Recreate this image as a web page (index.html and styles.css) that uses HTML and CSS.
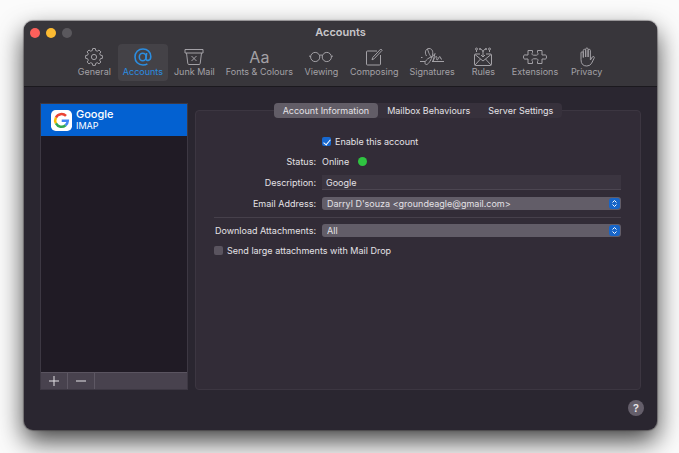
FILE: index.html
```html
<!DOCTYPE html>
<html lang="en">

<head>
  <meta charset="UTF-8" />
  <meta name="viewport" content="width=device-width, initial-scale=1" />
  <title>Accounts</title>
  <link rel="stylesheet" href="styles.css">
</head>

<body>
  <div class="window">
    <header class="titlebar">
      <div class="title-row">
        <div class="lights">
          <span class="light close"></span>
          <span class="light minimise"></span>
          <span class="light zoom"></span>
        </div>
        <h1>Accounts</h1>
      </div>

      <nav class="toolbar">
        <button type="button" class="tool">
          <svg viewBox="0 0 24 20"><path d="M10.7 1.5h2.6l.4 2 1.6.7 1.7-1.2 1.9 1.9-1.2 1.7.7 1.6 2 .4v2.7l-2 .4-.7 1.6 1.2 1.7-1.9 1.9-1.7-1.2-1.6.7-.4 2h-2.6l-.4-2-1.6-.7L7 16.9 5.100 15l1.200-1.700-.7-1.600-2-.4V8.600l2-.4.7-1.600L5.100 4.900 7 3l1.700 1.200 1.600-.7z"/><circle cx="12" cy="10" r="2.600"/></svg>
          <span>General</span>
        </button>
        <button type="button" class="tool active">
          <svg viewBox="0 0 24 20"><ellipse cx="11.700" cy="10" rx="3.400" ry="3.800" stroke-width="1.600"/><path stroke-width="1.600" d="M15.600 6l-.6 5.500c-.2 2.800 4.800 2.800 4.800-2C19.800 5 16.500 2 12 2c-4.700 0-8 3.300-8 8s3.300 8 8 8c1.700 0 3.300-.4 4.400-1.100"/></svg>
          <span>Accounts</span>
        </button>
        <button type="button" class="tool">
          <svg viewBox="0 0 24 20"><path d="M3 2.500h18v3.500H3zM4.500 6l1.300 10.500q.1 1 1.200 1h10q1.100 0 1.200-1L19.500 6M9.500 9l5 5M14.500 9l-5 5"/></svg>
          <span>Junk Mail</span>
        </button>
        <button type="button" class="tool">
          <span class="aa">Aa</span>
          <span>Fonts &amp; Colours</span>
        </button>
        <button type="button" class="tool">
          <svg viewBox="0 0 24 20"><circle cx="6.200" cy="10" r="4.600"/><circle cx="17.800" cy="10" r="4.600"/><path d="M10.500 8.500q1.500-1.200 3 0M1.600 9.500L0 9M22.400 9.500L24 9"/></svg>
          <span>Viewing</span>
        </button>
        <button type="button" class="tool">
          <svg viewBox="0 0 24 20"><path d="M15 4H5.500Q4.500 4 4.500 5v12q0 1 1 1h12q1 0 1-1V8"/><path d="M10 12.800l.7-2.300L18.800 2l1.300 1.300-8 8.500z"/></svg>
          <span>Composing</span>
        </button>
        <button type="button" class="tool">
          <svg viewBox="0 0 24 20"><path d="M1 10.500h1.500M0 14.500h5M12 14.500h12M6.500 9C4 5 6 1.500 9 1.500c4 0 4.500 4.500 3 8.500C10.500 14 8 18 6 17.500c-2.500-1 0-5 3-6.500s5-2.500 6-4.500L13 14c1.500-3 2.500-5 3.500-4.500s-.5 3 .5 3.500c1.200.4 2-4 3-3.500s0 3.500 2 2.500M7.500 2c1.500 5 2.500 6.500 4.500 9"/></svg>
          <span>Signatures</span>
        </button>
        <button type="button" class="tool">
          <svg viewBox="0 0 24 20"><path d="M9 7H4.500q-1 0-1 1v9.500q0 1 1 1h15q1 0 1-1V8q0-1-1-1H15M4 7.500l8 6.500 8-6.500M4 18l5.500-6M20 18l-5.500-6M12 10V5q0-2-2.500-3M12 5q0-2 2.500-3M10 8l2 2 2-2M5.500 5V3M18.500 5V3"/><circle cx="5.500" cy="2" r="1"/><circle cx="18.500" cy="2" r="1"/><circle cx="9" cy="2" r=".7"/><circle cx="15" cy="2" r=".7"/></svg>
          <span>Rules</span>
        </button>
        <button type="button" class="tool">
          <svg viewBox="0 0 24 20"><path d="M5 3.500h4.500v2c-1 1.300-.4 2.700 1 2.700h3c1.400 0 2-1.400 1-2.700v-2H19V8h2c1.800-.6 2.500.4 2.500 2s-.7 2.600-2.500 2h-2v4.500h-4.500v-2c1-1.300.4-2.700-1-2.700h-3c-1.400 0-2 1.400-1 2.700v2H5V12H3c-1.800.6-2.500-.4-2.500-2S1.200 7.400 3 8h2z"/></svg>
          <span>Extensions</span>
        </button>
        <button type="button" class="tool">
          <svg viewBox="0 0 24 20"><path d="M6 12.500V6q0-1.200 1.100-1.200T8.300 6v4.500V3.500q0-1.200 1.200-1.200t1.200 1.200V10V2.200Q10.700 1 11.900 1t1.200 1.200V10V3.500q0-1.200 1.100-1.200t1.200 1.200V13l1.900-3q.8-1 1.600-.4.700.5.200 1.600l-2.400 4.900Q15.200 19 11.800 19 6 19 6 12.500z"/></svg>
          <span>Privacy</span>
        </button>
      </nav>
    </header>

    <main class="content">
      <aside class="sidebar">
        <ul class="accounts">
          <li class="account selected">
            <svg class="google" viewBox="0 0 20 20"><rect width="20" height="20" rx="4.500" fill="#fff" stroke="none"/><path d="M14.300 5.700A6 6 0 0 0 4.700 7.200" stroke="#ea4335"/><path d="M4.700 7.200a6 6 0 0 0 0 5.600" stroke="#fbbc05"/><path d="M4.700 12.800a6 6 0 0 0 9.200 1.700" stroke="#34a853"/><path d="M13.900 14.500A6 6 0 0 0 16 10.200H10.200" stroke="#4285f4"/></svg>
            <div>
              <strong>Google</strong>
              <small>IMAP</small>
            </div>
          </li>
        </ul>
        <div class="list-actions">
          <button type="button" aria-label="Add account"><svg viewBox="0 0 10 10"><path d="M5 0v10M0 5h10"/></svg></button>
          <button type="button" aria-label="Remove account"><svg viewBox="0 0 10 10"><path d="M0 5h10"/></svg></button>
        </div>
      </aside>

      <section class="details">
        <div class="tabs">
          <button type="button" class="tab current">Account Information</button>
          <button type="button" class="tab">Mailbox Behaviours</button>
          <button type="button" class="tab">Server Settings</button>
        </div>
        <form class="panel">
          <div class="row">
            <label class="check field"><input type="checkbox" checked /> Enable this account</label>
          </div>
          <div class="row">
            <span class="name">Status:</span>
            <span class="status">Online <i class="dot"></i></span>
          </div>
          <div class="row">
            <label class="name" for="description">Description:</label>
            <input type="text" id="description" value="Google" />
          </div>
          <div class="row">
            <label class="name" for="email">Email Address:</label>
            <div class="popup">
              <select id="email">
                <option>Darryl D'souza &lt;groundeagle@gmail.com&gt;</option>
              </select>
              <svg viewBox="0 0 11 11"><path d="M3.500 4.500l2-2 2 2M3.500 6.500l2 2 2-2"/></svg>
            </div>
          </div>
          <hr class="separator" />
          <div class="row">
            <label class="name" for="download">Download Attachments:</label>
            <div class="popup">
              <select id="download">
                <option>All</option>
              </select>
              <svg viewBox="0 0 11 11"><path d="M3.500 4.500l2-2 2 2M3.500 6.500l2 2 2-2"/></svg>
            </div>
          </div>
          <label class="check"><input type="checkbox" /> Send large attachments with Mail Drop</label>
        </form>
      </section>
    </main>

    <footer class="footer">
      <button type="button" class="help" aria-label="Help">?</button>
    </footer>
  </div>
</body>

</html>
```
FILE: styles.css
```css
* {
  box-sizing: border-box;
}

body {
  margin: 0;
  min-height: 100vh;
  padding: 21px 22px 23px 24px;
  display: flex;
  background: #fbfbfb;
  font-family: Inter, "Liberation Sans", sans-serif;
  font-size: 9px;
  line-height: 13px;
  color: #e4e2e6;
  overflow: hidden;
}

button,
input,
select {
  font: inherit;
  color: inherit;
  margin: 0;
  padding: 0;
  border: none;
  background: none;
}

svg {
  fill: none;
  stroke: currentColor;
}

.window {
  flex: 1;
  display: flex;
  flex-direction: column;
  background: #2a2630;
  border-radius: 9px;
  box-shadow: 0 0 1px 1px rgba(40, 36, 40, 0.4), 0 11px 26px rgba(0, 0, 0, 0.75);
}

/* title bar and toolbar */
.titlebar {
  height: 66px;
  background: #38363b;
  border-bottom: 1px solid #1b191e;
  border-radius: 9px 9px 0 0;
}

.title-row {
  display: grid;
  grid-template-columns: 1fr auto 1fr;
  align-items: center;
  height: 23px;
  padding: 0 6px;
}

.lights {
  display: flex;
  gap: 6px;
}

.light {
  width: 10px;
  height: 10px;
  border-radius: 50%;
}

.close {
  background: #fc605b;
}

.minimise {
  background: #fcbb32;
}

.zoom {
  background: #5a585d;
}

h1 {
  margin: 0;
  font-size: 11px;
  font-weight: 600;
  color: #c8c6ca;
}

.toolbar {
  display: flex;
  justify-content: center;
  gap: 1px;
}

.tool {
  display: flex;
  flex-direction: column;
  align-items: center;
  min-width: 45px;
  height: 37px;
  padding: 3px 5px 0;
  border-radius: 4px;
  color: #a3a1a6;
  line-height: 10px;
  white-space: nowrap;
}

.tool svg {
  width: 24px;
  height: 20px;
}

.tool.active {
  background: #444247;
  color: #2b8de0;
}

.aa {
  font-size: 16px;
  line-height: 20px;
}

/* account list */
.content {
  flex: 1;
  display: flex;
  gap: 7px;
  padding: 16px 16px 0;
}

.sidebar {
  width: 148px;
  display: flex;
  flex-direction: column;
  border: 1px solid #3d3843;
  background: #201b25;
}

.accounts {
  flex: 1;
  margin: 0;
  padding: 0;
  list-style: none;
}

.account {
  display: flex;
  align-items: center;
  gap: 4px;
  height: 32px;
  padding-left: 10px;
}

.selected {
  background: #0361d1;
  color: #fff;
}

.google {
  width: 21px;
  height: 21px;
  stroke-width: 2.400;
}

.account strong,
.account small {
  display: block;
  font-size: 9px;
  line-height: 12px;
}

.account strong {
  font-size: 11px;
  font-weight: 500;
}

.list-actions {
  display: flex;
  height: 17px;
  background: #48424e;
  border-top: 1px solid #5a5460;
}

.list-actions button {
  width: 27px;
  border-right: 1px solid #5e5864;
  display: flex;
  align-items: center;
  justify-content: center;
}

.list-actions svg {
  width: 10px;
  height: 10px;
}

/* account details */
.details {
  flex: 1;
  display: flex;
  flex-direction: column;
}

.tabs {
  align-self: center;
  position: relative;
  display: flex;
  height: 15px;
  margin-bottom: -8px;
  background: #37313c;
  border-radius: 4px;
}

.tab {
  padding: 0 9px;
  border-radius: 4px;
  white-space: nowrap;
}

.tab.current {
  background: #625d67;
}

.panel {
  flex: 1;
  padding: 24px 19px 0 18px;
  background: #322c37;
  border: 1px solid #3c3641;
  border-radius: 4px;
}

.row {
  display: grid;
  grid-template-columns: 102px 1fr;
  column-gap: 6px;
  align-items: center;
  margin-bottom: 7px;
}

.name {
  text-align: right;
  white-space: nowrap;
}

.field {
  grid-column: 2;
}

.check {
  display: flex;
  align-items: center;
  gap: 4px;
}

.check input {
  appearance: none;
  width: 9px;
  height: 9px;
  border-radius: 2px;
  background: #5a545f;
}

.check input:checked {
  display: grid;
  place-items: center;
  background: #1768cf;
}

.check input:checked::before {
  content: "";
  width: 3px;
  height: 6px;
  border: solid #fff;
  border-width: 0 1px 1px 0;
  transform: rotate(40deg);
}

.status {
  display: flex;
  align-items: center;
  gap: 9px;
}

.dot {
  width: 9px;
  height: 9px;
  border-radius: 50%;
  background: #2fc441;
}

input[type="text"] {
  width: 100%;
  height: 15px;
  padding: 0 4px;
  background: #3b3540;
  border-bottom: 1px solid #4c4651;
}

.popup {
  position: relative;
  display: flex;
}

.popup select {
  appearance: none;
  width: 100%;
  height: 13px;
  padding: 0 5px;
  background: #625d68;
  border-radius: 3px;
}

.popup svg {
  position: absolute;
  top: 1px;
  right: 1px;
  width: 11px;
  height: 11px;
  border-radius: 3px;
  background: #1765c8;
  color: #fff;
  pointer-events: none;
}

.separator {
  height: 1px;
  margin: 7px 0 6px;
  border: none;
  background: #46404b;
}

.footer {
  display: flex;
  justify-content: flex-end;
  height: 40px;
  padding: 10px 13px;
}

.help {
  width: 16px;
  height: 16px;
  border-radius: 50%;
  background: #645e6a;
  font-size: 11px;
  font-weight: 600;
}
```
